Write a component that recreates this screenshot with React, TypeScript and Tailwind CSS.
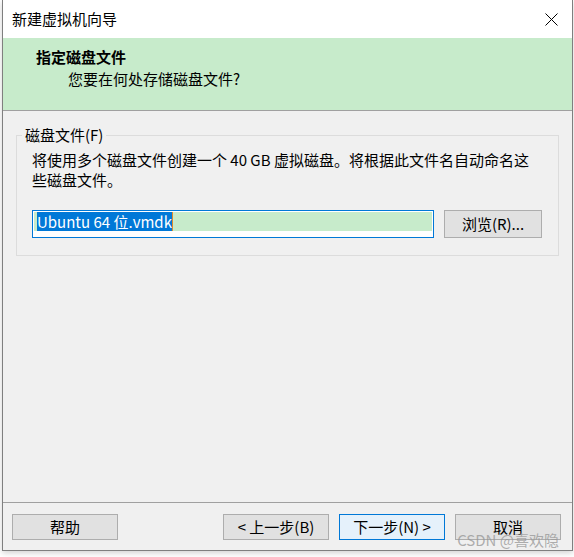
import React from 'react';

const font = "font-['Noto_Sans_CJK_SC','Noto_Sans',sans-serif]";

const WizardButton: React.FC<{ label: string; primary?: boolean }> = ({ label, primary }) => (
  <button
    className={
      primary
        ? 'w-[106px] h-[26px] border border-[#0078d7] bg-[#e5f1fb] text-[15px] leading-[20px] text-black'
        : 'w-[106px] h-[26px] border border-[#adadad] bg-[#e1e1e1] text-[15px] leading-[20px] text-black'
    }
  >
    {label}
  </button>
);

export default function App() {
  return (
    <div className={`relative w-[574px] h-[557px] bg-white ${font} text-black overflow-hidden`}>
      <div className="ml-[2px] w-[571px] h-[551px] flex flex-col border-x border-b border-[#7f7f7f] bg-[#f0f0f0] shadow-[0_2px_6px_rgba(0,0,0,0.18)]">
        {/* title bar */}
        <div className="h-[38px] flex items-center justify-between bg-white pl-[9px] pr-[14px]">
          <span className="text-[15px] leading-[20px]">新建虚拟机向导</span>
          <svg width="13" height="13" viewBox="0 0 13 13" className="mt-[1px]">
            <path d="M0.5 0.5 L12.5 12.5 M12.5 0.5 L0.5 12.5" stroke="#000" strokeWidth="1" />
          </svg>
        </div>

        {/* header */}
        <div className="h-[73px] bg-[#c7ebcb] border-b border-[#a0a0a0] pt-[9px] pl-[33px]">
          <div className="text-[15px] leading-[20px] font-bold">指定磁盘文件</div>
          <div className="text-[15px] leading-[20px] pl-[32px] mt-[2px]">您要在何处存储磁盘文件?</div>
        </div>

        {/* body */}
        <div className="flex-1 pt-[14px]">
          <fieldset className="mx-[13px] border border-[#dcdcdc] px-[15px] pb-[17px]">
            <legend className="-ml-[10px] px-[3px] text-[15px] leading-[20px]">磁盘文件(F)</legend>
            <p className="pt-[5px] text-[15px] leading-[20px] whitespace-nowrap">
              将使用多个磁盘文件创建一个 40 GB 虚拟磁盘。将根据此文件名自动命名这
              <br />
              些磁盘文件。
            </p>
            <div className="mt-[20px] flex items-center gap-[10px]">
              <div className="w-[402px] h-[28px] border border-[#0078d7] bg-white pt-[1px] px-[1px]">
                <div className="h-[19px] bg-[#c7ebcb] pl-[3px] flex items-center">
                  <span className="bg-[#0078d7] text-white text-[15px] leading-[19px] border-r border-[#e08a2a]">
                    Ubuntu 64 位.vmdk
                  </span>
                </div>
              </div>
              <button className="w-[98px] h-[28px] border border-[#adadad] bg-[#e1e1e1] text-[15px] leading-[20px]">
                浏览(R)...
              </button>
            </div>
          </fieldset>
        </div>

        {/* footer */}
        <div className="border-t border-[#a0a0a0] pt-[11px] pb-[10px] pl-[9px] pr-[11px] flex">
          <WizardButton label="帮助" />
          <div className="flex-1" />
          <div className="flex gap-[10px]">
            <WizardButton label="< 上一步(B)" />
            <WizardButton label="下一步(N) >" primary />
            <WizardButton label="取消" />
          </div>
        </div>
      </div>

      <span className="absolute right-[15px] top-[530px] text-[15px] leading-[20px] text-[rgba(150,150,150,0.75)]">
        CSDN @喜欢隐
      </span>
    </div>
  );
}
